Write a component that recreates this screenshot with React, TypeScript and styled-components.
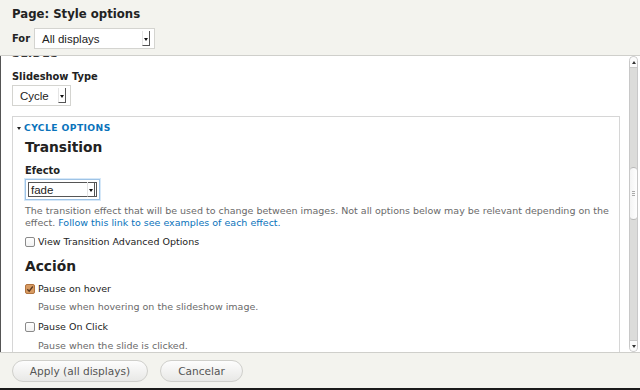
import React from "react";
import styled, { createGlobalStyle } from "styled-components";

const Global = createGlobalStyle`
  html, body { margin: 0; padding: 0; }
  body { font-family: "DejaVu Sans", Verdana, sans-serif; background: #fff; }
  #root { width: 640px; height: 390px; overflow: hidden; }
`;

const Frame = styled.div`
  width: 640px;
  height: 390px;
  display: flex;
  flex-direction: column;
  background: #f3f3ee;
  border-bottom: 2px solid #1a1a1a;
  box-sizing: border-box;
`;

const Header = styled.div`
  height: 56px;
  flex: none;
  padding: 5px 12px 0;
  box-sizing: border-box;
  border-bottom: 1px solid #cfcfcb;
`;

const Title = styled.h1`
  margin: 0;
  font-size: 11.7px;
  font-weight: bold;
  color: #222;
  line-height: 18px;
`;

const ForRow = styled.div`
  margin-top: 5px;
  display: flex;
  align-items: center;
  gap: 4px;
`;

const ForLabel = styled.span`
  font-size: 9.9px;
  font-weight: bold;
  color: #222;
`;

const SelectBox = styled.div<{ $w: number; $focus?: boolean }>`
  width: ${(p) => p.$w}px;
  height: 21px;
  box-sizing: border-box;
  display: flex;
  align-items: center;
  background: #fff;
  border: 1px solid ${(p) => (p.$focus ? "#9ec3e6" : "#d4d4d0")};
  box-shadow: ${(p) => (p.$focus ? "0 0 0 1px #d6e8f8" : "none")};
  padding: 2px;
`;

const SelectInner = styled.div<{ $focus?: boolean }>`
  flex: 1;
  height: 100%;
  display: flex;
  align-items: center;
  border: ${(p) => (p.$focus ? "1px solid #555" : "1px solid transparent")};
  box-sizing: border-box;
  padding-left: ${(p) => (p.$focus ? 2 : 4)}px;
  font-family: "Liberation Sans", Arial, sans-serif;
  font-size: 11.5px;
  color: #222;
`;

const SelectText = styled.span`
  flex: 1;
`;

const ArrowBtn = styled.span`
  width: 8px;
  height: 15px;
  box-sizing: border-box;
  border-left: 1px solid #e4e4e4;
  border-right: 1px solid #555;
  border-bottom: 1px solid #555;
  display: flex;
  align-items: center;
  justify-content: center;
  margin-right: 1px;
`;

const Tri = styled.span`
  width: 0;
  height: 0;
  border-left: 2.5px solid transparent;
  border-right: 2.5px solid transparent;
  border-top: 3px solid #111;
  margin-top: 2px;
`;

const Select = ({ value, w, focus }: { value: string; w: number; focus?: boolean }) => (
  <SelectBox $w={w} $focus={focus}>
    <SelectInner $focus={focus}>
      <SelectText>{value}</SelectText>
      <ArrowBtn>
        <Tri />
      </ArrowBtn>
    </SelectInner>
  </SelectBox>
);

const Body = styled.div`
  flex: 1;
  display: flex;
  background: #fff;
  border-left: 1px solid #555;
  min-height: 0;
`;

const Scroll = styled.div`
  flex: 1;
  overflow: hidden;
  padding: 0 8px 0 11px;
`;

const Inner = styled.div`
  margin-top: -9px;
`;

const Clipped = styled.div`
  font-size: 11px;
  font-weight: bold;
  color: #333;
  letter-spacing: 0.5px;
  line-height: 13px;
  text-transform: uppercase;
`;

const Label = styled.div<{ $mt?: number }>`
  font-size: 9.9px;
  font-weight: bold;
  color: #222;
  line-height: 12px;
  margin-top: ${(p) => p.$mt ?? 0}px;
  margin-bottom: 2px;
`;

const Fieldset = styled.div`
  margin-top: 10px;
  border: 1px solid #d6d6d6;
  border-bottom: none;
  padding: 5px 8px 0 12px;
  height: 300px;
`;

const Legend = styled.div`
  display: flex;
  align-items: center;
  gap: 3px;
  margin-left: -8px;
  font-size: 9.2px;
  font-weight: bold;
  color: #0a73bb;
  letter-spacing: 0.4px;
  line-height: 12px;
`;

const LegendTri = styled.span`
  width: 0;
  height: 0;
  border-left: 2.5px solid transparent;
  border-right: 2.5px solid transparent;
  border-top: 3px solid #222;
`;

const H2 = styled.h2<{ $mt?: number }>`
  margin: ${(p) => p.$mt ?? 0}px 0 0;
  font-size: 13.8px;
  font-weight: bold;
  color: #222;
  line-height: 18px;
`;

const Desc = styled.div<{ $indent?: boolean; $mt?: number }>`
  font-size: 9.5px;
  color: #6a6a6a;
  line-height: 12px;
  margin-top: ${(p) => p.$mt ?? 4}px;
  padding-left: ${(p) => (p.$indent ? 13 : 0)}px;
`;

const Link = styled.a`
  color: #0a73bb;
  text-decoration: none;
`;

const CheckRow = styled.div<{ $mt?: number }>`
  display: flex;
  align-items: center;
  gap: 3px;
  margin-top: ${(p) => p.$mt ?? 0}px;
  font-size: 9.5px;
  color: #222;
  line-height: 14px;
`;

const Box = styled.span`
  width: 10px;
  height: 10px;
  flex: none;
  box-sizing: border-box;
  border: 1px solid #8a8a8a;
  border-radius: 2px;
  background: linear-gradient(#fff, #f2f2f2);
`;

const CheckedBox = () => (
  <svg width="10" height="10" viewBox="0 0 10 10" style={{ flex: "none" }}>
    <rect x="0.5" y="0.5" width="9" height="9" rx="1.5" fill="#d89b62" stroke="#b07440" />
    <path d="M2.3 5.2 L4.2 7.2 L7.8 2.5" fill="none" stroke="#5a3a22" strokeWidth="1.3" />
  </svg>
);

const ScrollBar = styled.div`
  width: 11px;
  flex: none;
  display: flex;
  flex-direction: column;
  align-items: center;
  padding-right: 1px;
`;

const Track = styled.div`
  width: 9px;
  flex: 1;
  display: flex;
  flex-direction: column;
  align-items: stretch;
  border: 1px solid #c8c8c8;
  border-radius: 5px;
  background: #dcdcda;
  box-sizing: border-box;
`;

const Step = styled.div<{ $up?: boolean }>`
  height: 10px;
  background: #fbfbfb;
  border-radius: ${(p) => (p.$up ? "4px 4px 0 0" : "0 0 4px 4px")};
  border-${(p) => (p.$up ? "bottom" : "top")}: 1px solid #c8c8c8;
  display: flex;
  align-items: center;
  justify-content: center;
`;

const StepTri = styled.span<{ $up?: boolean }>`
  width: 0;
  height: 0;
  border-left: 2.5px solid transparent;
  border-right: 2.5px solid transparent;
  ${(p) => (p.$up ? "border-bottom: 3px solid #333;" : "border-top: 3px solid #333;")}
`;

const Thumb = styled.div`
  margin-top: 99px;
  height: 51px;
  background: linear-gradient(90deg, #f4f4f4, #fefefe);
  border-top: 1px solid #b8b8b8;
  border-bottom: 1px solid #b8b8b8;
  border-radius: 4px;
  display: flex;
  flex-direction: column;
  align-items: center;
  justify-content: center;
  gap: 1px;
`;

const Grip = styled.span`
  width: 3px;
  height: 1px;
  background: #aaa;
`;

const Spacer = styled.div`
  flex: 1;
`;

const Footer = styled.div`
  height: 35px;
  flex: none;
  border-top: 1px solid #cfcfcb;
  display: flex;
  align-items: center;
  gap: 12px;
  padding: 0 12px;
`;

const Button = styled.button<{ $w: number }>`
  width: ${(p) => p.$w}px;
  height: 22px;
  border: 1px solid #cfcfcb;
  border-radius: 11px;
  background: linear-gradient(#fdfdfd, #e8e8e6);
  font-family: "DejaVu Sans", Verdana, sans-serif;
  font-size: 10.6px;
  color: #555;
  padding: 0;
  margin-top: 1px;
`;

export default function App() {
  return (
    <>
      <Global />
      <Frame>
        <Header>
          <Title>Page: Style options</Title>
          <ForRow>
            <ForLabel>For</ForLabel>
            <Select value="All displays" w={121} />
          </ForRow>
        </Header>
        <Body>
          <Scroll>
            <Inner>
              <Clipped>Slides</Clipped>
              <Label $mt={11}>Slideshow Type</Label>
              <Select value="Cycle" w={59} />
              <Fieldset>
                <Legend>
                  <LegendTri />
                  CYCLE OPTIONS
                </Legend>
                <H2 $mt={4}>Transition</H2>
                <Label $mt={9}>Efecto</Label>
                <Select value="fade" w={75} focus />
                <Desc $mt={5}>
                  The transition effect that will be used to change between images. Not all options below may be relevant depending on the effect.{" "}
                  <Link>Follow this link to see examples of each effect.</Link>
                </Desc>
                <CheckRow $mt={6}>
                  <Box />
                  View Transition Advanced Options
                </CheckRow>
                <H2 $mt={8}>Acción</H2>
                <CheckRow $mt={7}>
                  <CheckedBox />
                  Pause on hover
                </CheckRow>
                <Desc $indent $mt={5}>Pause when hovering on the slideshow image.</Desc>
                <CheckRow $mt={7}>
                  <Box />
                  Pause On Click
                </CheckRow>
                <Desc $indent $mt={6}>Pause when the slide is clicked.</Desc>
              </Fieldset>
            </Inner>
          </Scroll>
          <ScrollBar>
            <Track>
              <Step $up>
                <StepTri $up />
              </Step>
              <Thumb>
                <Grip />
                <Grip />
                <Grip />
              </Thumb>
              <Spacer />
              <Step>
                <StepTri />
              </Step>
            </Track>
          </ScrollBar>
        </Body>
        <Footer>
          <Button $w={136}>Apply (all displays)</Button>
          <Button $w={83}>Cancelar</Button>
        </Footer>
      </Frame>
    </>
  );
}
